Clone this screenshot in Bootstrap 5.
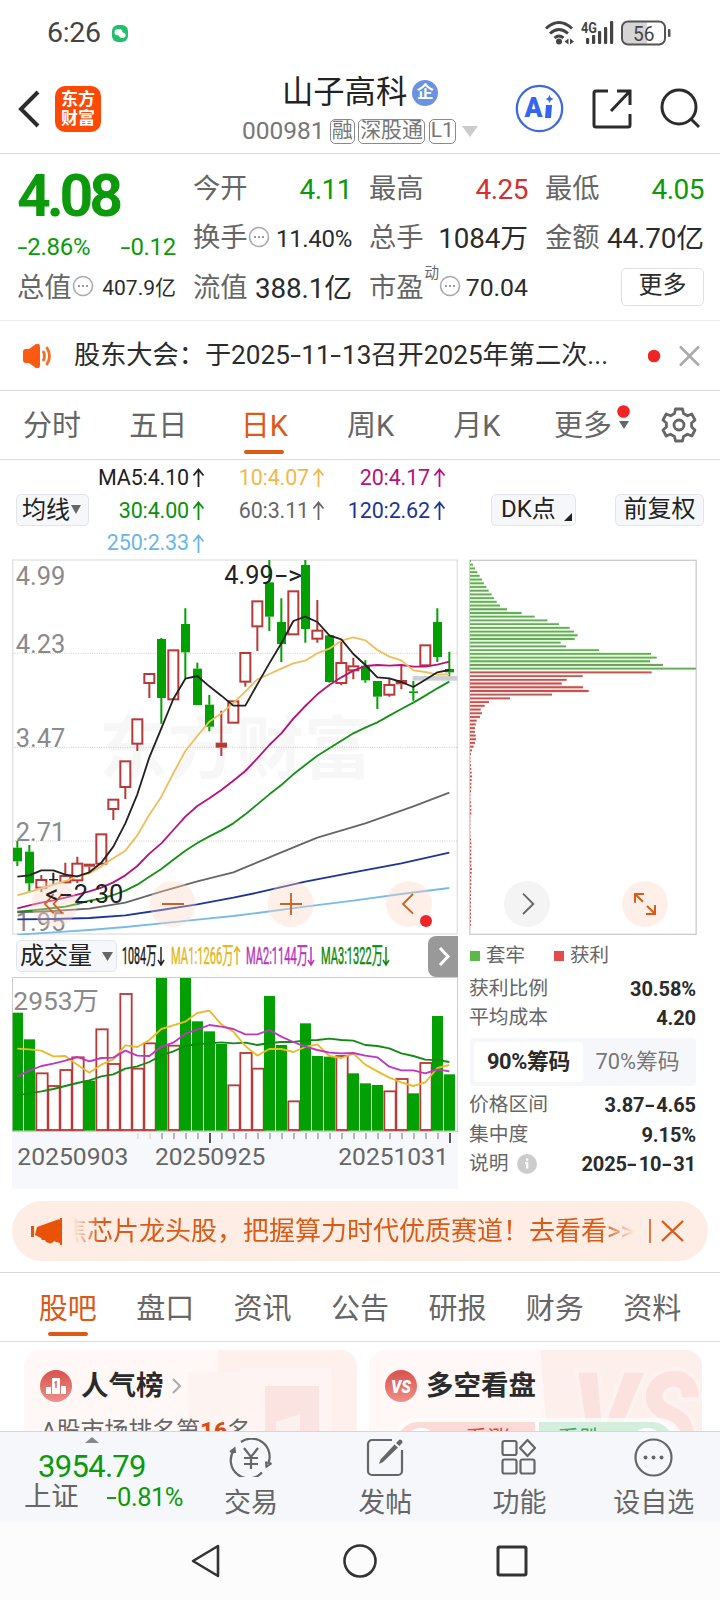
<!DOCTYPE html>
<html lang="zh-CN">
<head>
<meta charset="utf-8">
<meta name="viewport" content="width=device-width, initial-scale=1">
<title>山子高科 000981</title>
<link href="https://cdn.jsdelivr.net/npm/bootstrap@5.3.0/dist/css/bootstrap.min.css" rel="stylesheet">
<style>
:root{--up:#d22f2f;--down:#0c9a0c;--accent:#dc5a16;--ink:#2b2b2b;--grey:#666;--rule:#d9d9d9}
body{width:720px;height:1600px;overflow:hidden;margin:0;background:#fff;color:var(--ink);font-family:Roboto,"Noto Sans CJK SC",sans-serif;line-height:1}
svg{display:block;flex:none}
svg text{font-family:Roboto,"Noto Sans CJK SC",sans-serif}
.nw{white-space:nowrap}
.c-up{color:var(--up)}.c-down{color:var(--down)}.c-grey{color:var(--grey)}.c-accent{color:var(--accent)}
.hy{display:inline-block;transform:scaleX(1.5);margin:0 2.5px 0 1.5px}
.statusbar{height:64px;padding:2px 49px 0 47px;color:#444}
.clock{font-size:28.5px;letter-spacing:-.3px}
.hdr{height:90px;border-bottom:1px solid var(--rule);padding:0 19px 0 18px}
.logo{width:46px;height:46px;border-radius:10px;background:#fc4a06;color:#fff;font-weight:700;font-size:17px;line-height:19px;padding-top:4px;text-align:center;margin-left:15px}
.stock-name{font-size:31.3px;height:32px;line-height:32px;color:#222}
.corp{width:26px;height:26px;border-radius:50%;background:#6a92e2;color:#fff;font-size:17px;font-weight:700;line-height:25px;text-align:center;margin-left:5px}
.code{font-size:24.5px;color:#777;letter-spacing:0;margin-right:5px}
.tagbox{border:1.5px solid #8a8a8a;border-radius:5px;height:25px;font-size:21px;line-height:21px;color:#777;padding:0 1px;margin-right:3.5px}
.quote{height:167px;border-bottom:1px solid #ececec;padding:11px 16px 0 17px;display:grid;grid-template-columns:repeat(4,1fr);column-gap:17px;grid-template-rows:49px 50px 49px}
.quote>div{display:flex;align-items:center;justify-content:space-between;white-space:nowrap}
.lbl{font-size:27.3px;color:#666}
.v28{font-size:28px;letter-spacing:-.5px}.v27{font-size:27.8px;letter-spacing:-.1px}.v24{font-size:24px;letter-spacing:-.3px}.v21{font-size:21px}
.price{font-size:59px;font-weight:700;letter-spacing:-4.2px;line-height:60px;margin-top:13px}
.more{width:83px;height:38px;border:1.5px solid #e0e0e0;border-radius:5px;font-size:24px;line-height:33px;text-align:center}
.news{height:70px;border-bottom:1px solid var(--rule);padding:0 20px 0 22px}
.ptabs{height:69px;border-bottom:1px solid var(--rule)}
.ptabs>div{width:106.2px;text-align:center;font-size:29px;color:#666;position:relative;left:-1px;height:68px;line-height:71px;white-space:nowrap}
.ptabs>.on,.stabs>.on{color:var(--accent)}
.on::after{content:"";position:absolute;left:50%;width:40px;margin-left:-20px;bottom:5px;height:4.5px;border-radius:2px;background:var(--accent)}
.ma{height:99px;padding:0 16px}
.magrid{display:grid;grid-template-columns:105px 120px 121px;grid-auto-rows:32.7px;margin:1.5px 1px 0 11px;font-size:21.5px;text-align:right;width:346px}
.magrid>div{display:flex;justify-content:flex-end;align-items:center;gap:3px;letter-spacing:-.15px;white-space:nowrap}
.chip{background:#f6f7fa;border:1.5px solid #e1e4e8;border-radius:5px;height:32px;line-height:28px;font-size:24px;color:#222;white-space:nowrap;position:relative}
.charts{height:630px;padding-left:12px}
.rp{width:228px;margin-left:11px}
.rp .rw{display:flex;justify-content:space-between;align-items:center;height:29.3px;font-size:19.8px;color:#666;padding-right:1px}
.rp .rw b{font-size:20px;color:#2b2b2b;letter-spacing:-.1px}
.key{width:10px;height:10px}
.seg{height:48px;background:#f6f7fa;border-radius:4px;padding:4px;margin:5px 1px 5px 1px;display:flex;font-size:21.8px;line-height:40px;text-align:center;color:#777}
.seg>div:first-child{background:#fff;width:109px;border-radius:4px;color:#2b2b2b;font-weight:700;letter-spacing:-.3px;white-space:nowrap}
.seg>div:last-child{flex:1}
.promo{margin:12px 12px 0;height:60px;border-radius:30px;background:#fdede4;padding:0 22px 0 19px;color:var(--accent)}
.ticker{width:562px;height:36px;line-height:36px;margin-left:11px;overflow:hidden;white-space:nowrap;font-size:26px;-webkit-mask-image:linear-gradient(90deg,transparent,#000 26px,#000 530px,transparent);mask-image:linear-gradient(90deg,transparent,#000 26px,#000 530px,transparent)}
.ticker>span{display:block;margin-left:-12px}
.stabs{height:70px;margin-top:11px;border-top:1px solid var(--rule);border-bottom:1px solid var(--rule);padding:0 19px}
.stabs>div{flex:1;text-align:center;font-size:29px;line-height:72px;height:68px;color:#666;position:relative}
.feed{height:89px;padding:8px 18px 0 24px;overflow:hidden;gap:12px}
.tile{width:333px;height:150px;border-radius:16px;overflow:hidden;background:#fff8f6;position:relative}
.tile .deco{position:absolute;right:0;top:0}
.tile .inner{position:relative}
.tile h3{font-size:27.5px;font-weight:700;margin:0 0 0 9px;line-height:32px;color:#2b2b2b}
.dock{height:91px;background:#f5f7fa;border-top:1.5px solid #d3d6da}
.dock .it{width:134.2px;display:flex;flex-direction:column;align-items:center;font-size:27px;color:#666;position:relative;left:1px}
.dock .it svg{margin-top:6px;margin-bottom:13px}
.sysnav{height:78px;background:#fcfcfc;padding:0 192px 0 190px}
</style>
</head>
<body>
<div class="statusbar d-flex align-items-center">
  <span class="clock">6:26</span>
  <svg width="16" height="17" viewBox="0 0 16 17" style="margin-left:11px"><rect width="16" height="17" rx="6" fill="#22bf6c"/><ellipse cx="6.500" cy="7.200" rx="4" ry="3.200" fill="#fff"/><ellipse cx="10.300" cy="10.300" rx="3.300" ry="2.700" fill="#fff"/></svg>
  <div class="ms-auto d-flex align-items-center">
    <svg width="31" height="26" viewBox="0 0 31 26" fill="none" stroke="#444" stroke-width="3"><path d="M2 8.500Q15 -3.500 28 8.500M6 13.500Q15 5.500 24 13.500M10.500 18Q15 14 19.500 18"/><circle cx="15" cy="21.500" r="3" fill="#444" stroke="none"/><path d="M24.500 18.500v6l-4-3zM26 18.500v6l4-3z" fill="#444" stroke="none"/></svg>
    <svg width="34" height="26" viewBox="0 0 34 26" style="margin-left:6px" fill="#444"><text x="0" y="12.500" font-size="15" font-weight="700" textLength="16" lengthAdjust="spacingAndGlyphs">4G</text><rect x="5" y="18" width="3.200" height="6" rx="1"/><rect x="11" y="15" width="3.200" height="9" rx="1"/><rect x="17" y="11" width="3.200" height="13" rx="1"/><rect x="23" y="7" width="3.200" height="17" rx="1"/><rect x="29" y="1" width="3.200" height="23" rx="1"/></svg>
    <svg width="50" height="26" viewBox="0 0 50 26" style="margin-left:6px"><rect x="1" y="1.500" width="43" height="23" rx="6" fill="#fff"/><path d="M7 2h19v22H7a5 5 0 0 1-5-5V7a5 5 0 0 1 5-5z" fill="#d5d5d5"/><rect x="1" y="1.500" width="43" height="23" rx="6" fill="none" stroke="#555" stroke-width="2"/><rect x="47" y="9" width="2.500" height="8" rx="1" fill="#555"/><text x="12" y="20.500" font-size="21" fill="#444" textLength="21.500" lengthAdjust="spacingAndGlyphs">56</text></svg>
  </div>
</div>

<header class="hdr d-flex">
  <div class="d-flex align-items-center" style="width:224px">
    <svg width="22" height="38" viewBox="0 0 22 38" fill="none" stroke="#2b2b2b" stroke-width="4"><path d="M20 2L3 19l17 17"/></svg>
    <div class="logo">东方<br>财富</div>
  </div>
  <div style="width:236px;padding-top:13px">
    <div class="d-flex align-items-center nw" style="padding-left:40px"><span class="stock-name">山子高科</span><span class="corp">企</span></div>
    <div class="d-flex align-items-center nw" style="margin-top:10px"><span class="code">000981</span><span class="tagbox">融</span><span class="tagbox">深股通</span><span class="tagbox">L1</span><svg width="16" height="11" viewBox="0 0 16 11" style="margin-left:3px"><path d="M0 0h16L8 11z" fill="#ccc"/></svg></div>
  </div>
  <div class="d-flex align-items-center ms-auto" style="gap:28px">
    <svg width="49" height="49" viewBox="0 0 49 49"><circle cx="24.500" cy="24.500" r="22.700" fill="#fff" stroke="#3f68dc" stroke-width="2.300"/><text x="9.500" y="33" font-size="28" font-weight="900" fill="#3564f0" textLength="18" lengthAdjust="spacingAndGlyphs">A</text><path d="M31 21h6l-1 13h-6z" fill="#3564f0"/><path d="M34.500 11l1.300 2.700 2.700 1.300-2.700 1.300-1.300 2.700-1.300-2.700-2.700-1.300 2.700-1.300z" fill="#3564f0"/></svg>
    <svg width="40" height="40" viewBox="0 0 40 40" fill="none" stroke="#2b2b2b" stroke-width="3"><path d="M16 2H4a2 2 0 0 0-2 2v32a2 2 0 0 0 2 2h32a2 2 0 0 0 2-2V25M25 2h13v14M38 2L19 22"/></svg>
    <svg width="41" height="41" viewBox="0 0 41 41" fill="none" stroke="#2b2b2b" stroke-width="3"><circle cx="19" cy="19" r="17"/><path d="M31 31l8 8"/></svg>
  </div>
</header>

<section class="quote">
  <div class="c-down"><span class="price">4.08</span></div>
  <div><span class="lbl">今开</span><span class="v28 c-down">4.11</span></div>
  <div><span class="lbl">最高</span><span class="v28 c-up">4.25</span></div>
  <div><span class="lbl">最低</span><span class="v28 c-down">4.05</span></div>
  <div class="c-down v24" style="padding-top:15px"><span><span class="hy">-</span>2.86%</span><span><span class="hy">-</span>0.12</span></div>
  <div><span class="d-flex align-items-center"><span class="lbl">换手</span><svg width="22" height="22" viewBox="0 0 22 22" style="margin-top:-4px"><circle cx="11" cy="11" r="9.500" fill="none" stroke="#aaa" stroke-width="1.600"/><path d="M6 11h2M10 11h2M14 11h2" stroke="#999" stroke-width="2"/></svg></span><span class="v24">11.40%</span></div>
  <div><span class="lbl">总手</span><span class="v27">1084万</span></div>
  <div><span class="lbl">金额</span><span class="v27">44.70亿</span></div>
  <div><span class="d-flex align-items-center"><span class="lbl">总值</span><svg width="22" height="22" viewBox="0 0 22 22" style="margin-top:-4px"><circle cx="11" cy="11" r="9.500" fill="none" stroke="#aaa" stroke-width="1.600"/><path d="M6 11h2M10 11h2M14 11h2" stroke="#999" stroke-width="2"/></svg></span><span class="v21">407.9亿</span></div>
  <div><span class="lbl">流值</span><span class="v27">388.1亿</span></div>
  <div><span class="d-flex align-items-center"><span class="lbl">市盈</span><span class="c-grey" style="font-size:14.500px;margin:-28px 0 0 1px">动</span><svg width="22" height="22" viewBox="0 0 22 22" style="margin-top:-4px"><circle cx="11" cy="11" r="9.500" fill="none" stroke="#aaa" stroke-width="1.600"/><path d="M6 11h2M10 11h2M14 11h2" stroke="#999" stroke-width="2"/></svg></span><span style="font-size:24.800px">70.04</span></div>
  <div class="justify-content-end"><span class="more ms-auto" style="margin-top:-3px">更多</span></div>
</section>

<section class="news d-flex align-items-center">
  <svg width="31" height="26" viewBox="0 0 31 26"><path d="M1 9q0-3 3-3h3L14 1q4-1 4 3v18q0 4-4 3l-7-5H4q-3 0-3-3z" fill="#fc5a10"/><path d="M21 8q3 5 0 10M24.500 4q6 9 0 18" fill="none" stroke="#fc6a24" stroke-width="2.800"/></svg>
  <span class="nw" style="font-size:26.200px;margin-left:21px;width:538px;color:#2b2b2b">股东大会：于2025<span class="hy">-</span>11<span class="hy">-</span>13召开2025年第二次...</span>
  <svg class="ms-auto" width="52" height="22" viewBox="0 0 52 22"><circle cx="6" cy="11" r="6.300" fill="#ef2424"/><path d="M32 1.500l19 19M51 1.500l-19 19" stroke="#aaa" stroke-width="2.600"/></svg>
</section>

<nav class="ptabs d-flex">
  <div>分时</div><div>五日</div><div class="on">日K</div><div>周K</div><div>月K</div>
  <div>更多<svg class="position-absolute" style="left:87px;top:14px" width="14" height="26" viewBox="0 0 14 26"><circle cx="6.500" cy="6.500" r="6.300" fill="#ef2424"/><path d="M2 16h10l-5 8z" fill="#666"/></svg></div>
  <svg class="my-auto" style="margin-left:24px" width="36" height="36" viewBox="0 0 36 36" fill="none" stroke="#666" stroke-width="2.800" stroke-linejoin="round"><path d="M14.500 2h7l1 4.500 4 2.300 4.300-1.800 3.200 6-3.400 3v4l3.400 3-3.200 6-4.300-1.800-4 2.300-1 4.500h-7l-1-4.500-4-2.300L5.200 29 2 23l3.400-3v-4L2 13l3.200-6 4.300 1.800 4-2.300z"/><circle cx="18" cy="18" r="5"/></svg>
</nav>

<section class="ma d-flex">
  <div class="chip d-flex align-items-center align-self-center" style="width:73px;padding-left:5px;gap:1px">均线<svg width="10" height="9" viewBox="0 0 10 9"><path d="M0 0h10L5 9z" fill="#666"/></svg></div>
  <div class="magrid" id="legend"></div>
  <div class="chip align-self-center" style="width:85px;margin-left:44px;padding-left:9px">DK点<svg class="position-absolute" style="right:3px;bottom:4px" width="8" height="8"><path d="M8 0v8H0z" fill="#222"/></svg></div>
  <div class="chip align-self-center ms-auto text-center" style="width:89px">前复权</div>
</section>

<section class="charts d-flex">
  <div style="width:446px">
    <svg width="446" height="376" viewBox="36 27 1338 1128" id="kline"></svg>
    <div class="d-flex align-items-center" style="height:42px;padding-left:4px">
      <div class="chip d-flex align-items-center" style="width:101px;padding-left:3px;gap:10px">成交量<svg width="11" height="9" viewBox="0 0 11 9"><path d="M0 0h11L5.500 9z" fill="#666"/></svg></div>
      <svg width="300" height="34" viewBox="117 0 300 34" font-size="23" id="vollegend"></svg>
      <svg class="ms-auto" width="30" height="41" viewBox="0 0 30 41"><path d="M8 0h22v41H8a8 8 0 0 1-8-8V8a8 8 0 0 1 8-8z" fill="#999"/><path d="M12 12l8 8.500-8 8.500" fill="none" stroke="#fff" stroke-width="3"/></svg>
    </div>
    <svg width="446" height="212" viewBox="36 141 1338 636" id="volume"></svg>
  </div>
  <div class="rp">
    <svg width="228" height="376" viewBox="27 27 684 1128" id="chips"></svg>
    <div class="d-flex align-items-center" style="height:39px;font-size:19.500px;color:#666;padding:3px 0 0 1px"><span class="key" style="background:#5bb84b"></span><span style="margin:0 29px 0 6px">套牢</span><span class="key" style="background:#e64b4b"></span><span style="margin-left:6px">获利</span></div>
    <div class="rw"><span>获利比例</span><b>30.58%</b></div>
    <div class="rw"><span>平均成本</span><b>4.20</b></div>
    <div class="seg"><div>90%筹码</div><div>70%筹码</div></div>
    <div class="rw"><span>价格区间</span><b>3.87<span class="hy">-</span>4.65</b></div>
    <div class="rw"><span>集中度</span><b>9.15%</b></div>
    <div class="rw"><span class="d-flex align-items-center" style="gap:8px">说明<svg width="20" height="20" viewBox="0 0 20 20"><circle cx="10" cy="10" r="10" fill="#ccc"/><path d="M9 4.500h2.300v2.200H9zM8 8h3.300v6.500H9V10H8z" fill="#fff"/></svg></span><b>2025<span class="hy">-</span>10<span class="hy">-</span>31</b></div>
  </div>
</section>

<section class="promo d-flex align-items-center">
  <svg width="31" height="27" viewBox="0 0 31 27" fill="#ea5304"><path d="M0 8h3v11H0zM6 9L27 1.500h2V0h2v27h-2v-2l-4-1-2-1q-2 3-5 2l-3-1-1-2-3 0-1-2-6-3z"/></svg>
  <div class="ticker"><span>焦芯片龙头股，把握算力时代优质赛道！去看看&gt;&gt;</span></div>
  <svg class="ms-auto" width="38" height="26" viewBox="0 0 38 26" stroke="#dc5a16"><path d="M2 1v24" stroke-width="1.600"/><path d="M14 3l21 20M35 3L14 23" stroke-width="2.400"/></svg>
</section>

<nav class="stabs d-flex"><div class="on">股吧</div><div>盘口</div><div>资讯</div><div>公告</div><div>研报</div><div>财务</div><div>资料</div></nav>

<section class="feed d-flex">
  <div class="tile">
    <svg class="deco" width="175" height="90" viewBox="0 0 175 90"><path d="M36 0h139v90H36z" fill="#fdeeeb" opacity=".8"/><path d="M6 90V22h56v68z" fill="#fdf3f1"/><path d="M26 90V65h32V18h92v72z" fill="#fef4f2"/><path d="M83 36h54v54H83z" fill="#fae3e0"/><path d="M94 72l24-8v26H94z" fill="#fdf0ee"/></svg>
    <div class="inner" style="padding:20px 0 0 16px">
      <div class="d-flex align-items-center"><svg width="32" height="32" viewBox="0 0 32 32"><defs><linearGradient id="rg" x2="0" y2="1"><stop stop-color="#d9504c"/><stop offset="1" stop-color="#ef9089"/></linearGradient></defs><circle cx="16" cy="16" r="16" fill="url(#rg)"/><path d="M6 24v-7h5v7zM12 24V8h8v16zM21 24v-8h5v8z" fill="#fff"/><path d="M14.500 13l1.500-1v6" stroke="#dc645f" stroke-width="1.500" fill="none"/></svg><h3>人气榜</h3><svg style="margin-left:8px" width="10" height="16" viewBox="0 0 10 16" fill="none" stroke="#aaa" stroke-width="2"><path d="M1 1l7 7-7 7"/></svg></div>
      <div class="nw c-grey" style="font-size:24px;margin:17px 0 0 1px;letter-spacing:-.1px">A股市场排名第<b style="color:#dc4a16">16</b>名</div>
    </div>
  </div>
  <div class="tile">
    <svg class="deco" width="162" height="90" viewBox="0 0 162 90"><path d="M0 0h162v90H8z" fill="#fdecea" opacity=".8"/><text x="32" y="107" font-size="118" font-weight="900" font-style="italic" fill="#fbe2df" stroke="#fef2f0" stroke-width="8" paint-order="stroke" textLength="126" lengthAdjust="spacingAndGlyphs">VS</text></svg>
    <div class="inner" style="padding:20px 0 0 16px">
      <div class="d-flex align-items-center"><svg width="32" height="32" viewBox="0 0 32 32"><circle cx="16" cy="16" r="16" fill="url(#rg)"/><text x="6" y="22.500" font-size="19" font-weight="900" font-style="italic" fill="#fff" textLength="20" lengthAdjust="spacingAndGlyphs">VS</text></svg><h3>多空看盘</h3></div>
      <svg style="margin:16px 0 0 8px" width="290" height="60" viewBox="0 0 290 60"><rect x="0" y="0" width="290" height="60" rx="24" fill="#fff" opacity=".7"/><path d="M142 4H25a21 21 0 0 0 0 42h117z" fill="#fcdad7"/><path d="M146 4h113a21 21 0 0 1 0 42H146z" fill="#d4eedc"/><circle cx="28" cy="27" r="17" fill="#fff"/><circle cx="254" cy="27" r="17" fill="#fff"/><text x="72" y="29" font-size="22.500" fill="#dc4a32">看涨</text><text x="164" y="29" font-size="22.500" fill="#3fa565">看跌</text></svg>
    </div>
  </div>
</section>

<footer class="dock d-flex">
  <div style="width:183px;padding-left:24px">
    <svg style="margin:5px 0 0 61px" width="14" height="6" viewBox="0 0 14 6"><path d="M0 6h14L7 0z" fill="#888"/></svg>
    <div class="c-down" style="font-size:31px;letter-spacing:-.7px;margin:8px 0 0 14px">3954.79</div>
    <div class="d-flex align-items-center justify-content-between" style="margin-top:2px"><span class="lbl">上证</span><span class="c-down" style="font-size:25.500px;letter-spacing:-.5px"><span class="hy">-</span>0.81%</span></div>
  </div>
  <div class="it"><svg width="44" height="39" viewBox="0 0 44 39" fill="none" stroke="#666" stroke-width="2.200"><path d="M12 4A18 18 0 0 1 39 26M42.500 25l-5 3.500-.5-5M33 34.500A18 18 0 0 1 5 12M1 14l4.500-3.500L6 15M15 10l7 9 7-9M15 20h14M15 26h14M22 19v12"/></svg>交易</div>
  <div class="it"><svg width="38" height="39" viewBox="0 0 38 39" fill="none" stroke="#666" stroke-width="2.200"><path d="M26 2H6a4 4 0 0 0-4 4v27a4 4 0 0 0 4 4h26a4 4 0 0 0 4-4V12"/><path d="M28.500 6.500l3.500 3-15 14.500-4 2 1.500-4.500zM30 5l3.500-3.500q3 0 3 3L33.500 8z" fill="#666" stroke="none"/></svg>发帖</div>
  <div class="it"><svg width="36" height="39" viewBox="0 0 36 39" fill="none" stroke="#666" stroke-width="2.200"><rect x="1.500" y="3" width="14" height="14" rx="2"/><rect x="1.500" y="21.500" width="14" height="14" rx="2"/><rect x="19.500" y="21.500" width="14" height="14" rx="2"/><path d="M26.500 2l7.500 8-7.500 8-7.500-8z" stroke-linejoin="round"/></svg>功能</div>
  <div class="it"><svg width="39" height="39" viewBox="0 0 39 39" fill="none" stroke="#666" stroke-width="2.200"><circle cx="19.500" cy="19.500" r="18"/><g fill="#666" stroke="none"><circle cx="11.500" cy="19.500" r="2"/><circle cx="19.500" cy="19.500" r="2"/><circle cx="27.500" cy="19.500" r="2"/></g></svg>设自选</div>
</footer>

<div class="sysnav d-flex align-items-center justify-content-between">
  <svg width="31" height="34" viewBox="0 0 31 34" fill="none" stroke="#333" stroke-width="2.600" stroke-linejoin="round"><path d="M28 2v30L3 17z"/></svg>
  <svg width="34" height="34" viewBox="0 0 34 34" fill="none" stroke="#333" stroke-width="2.600" style="margin-left:2px"><circle cx="17" cy="17" r="15.500"/></svg>
  <svg width="32" height="32" viewBox="0 0 32 32" fill="none" stroke="#333" stroke-width="3"><rect x="2" y="2" width="28" height="28" rx="1.500"/></svg>
</div>

<script src="https://cdn.jsdelivr.net/npm/bootstrap@5.3.0/dist/js/bootstrap.bundle.min.js"></script>
<script>
const G='#02a002',R='#b83a38',STEP=36,X0=52;
const cx=i=>X0+STEP*i;
const line=(a,c,w=5.5)=>`<polyline fill="none" stroke="${c}" stroke-width="${w}" stroke-linejoin="round" points="${a.map((p,i)=>Array.isArray(p)?cx(p[0])+','+p[1]:cx(i)+','+p).join(' ')}"/>`;
const label=(x,y,s,w,size,c)=>`<text x="${x}" y="${y}" font-size="${size}" fill="${c}" textLength="${w}" lengthAdjust="spacingAndGlyphs">${s}</text>`;

/* legend of moving averages */
document.getElementById('legend').innerHTML=[['MA5:4.10','#222'],['10:4.07','#efb84e'],['20:4.17','#b6127c'],['30:4.00','#0c8f0c'],['60:3.11','#666'],['120:2.62','#1d3599'],['250:2.33','#6cb5e8']]
 .map(([t,c])=>`<div style="color:${c}">${t}<svg width="13" height="19" viewBox="0 0 13 19" fill="none" stroke="currentColor" stroke-width="1.8"><path d="M6.500 19V2M1.500 7.500l5-6 5 6"/></svg></div>`).join('');

/* candles: kind, high, open/close top, open/close bottom, low */
const candles=[['g',872,893,934,948],['g',885,905,1000,1025],['r',975,988,1012,1025],['k',968,987,991,1005],['r',938,976,996,1000],['r',920,939,990,1000],['s',941,941,950,966],['r',851,851,940,940],['r',747,747,776,810],['r',632,632,710,747],['r',506,506,580,603],['r',370,370,398,444],['g',264,267,444,521],['r',299,299,447,447],['g',175,222,307,385],['g',338,356,465,465],['g',435,464,530,544],['s',482,578,593,618],['r',452,452,517,517],['r',307,307,394,410],['r',152,152,228,303],['g',30,97,200,243],['g',145,216,282,336],['r',122,122,252,252],['g',30,45,237,278],['r',150,240,265,278],['g',256,256,396,398],['r',275,337,398,406],['r',323,347,360,388],['g',331,347,391,398],['g',393,393,440,477],['r',385,403,433,440],['s',343,390,403,418],['g',393,424,429,452],['r',284,284,345,345],['g',175,216,321,336],['g',305,357,367,378]];
let k='<rect x="36" y="27" width="1338" height="1128" fill="#fff"/>';
k+='<text x="298" y="670" font-size="205" font-weight="700" fill="#f7f7f8" textLength="818" lengthAdjust="spacingAndGlyphs">东方财富</text>';
[310,592,873].forEach(y=>k+=`<path d="M38 ${y}H1372" stroke="#ccc" stroke-width="3" stroke-dasharray="3 4"/>`);
k+='<rect x="38" y="30" width="1334" height="1122" fill="none" stroke="#e0e0e0" stroke-width="4"/>';
[[0,106],[0,308],[0,590],[0,872]].forEach((p,i)=>k+=label(47,p[1],['4.99','4.23','3.47','2.71'][i],149,75,'#8a8a8a'));
k+=label(47,1142,'1.95',149,75,'#8a8a8a');
k+='<rect x="1238" y="378" width="134" height="14" fill="#ccd0d3"/>';
candles.forEach(([t,h,a,b,l],i)=>{const x=cx(i),c=t=='g'?G:t=='k'?'#222':R;
 k+=`<path d="M${x} ${h}V${t=='k'?l:a}M${x} ${b}V${l}" stroke="${c}" stroke-width="6"/>`;
 k+=t=='r'?`<rect x="${x-15}" y="${a+2}" width="30" height="${b-a-1}" fill="#fff" stroke="${c}" stroke-width="6"/>`:`<rect x="${x-(t=='s'?17:13)}" y="${a}" width="${t=='s'?34:27}" height="${Math.max(b-a,4)}" fill="${c}"/>`;});
k+=line([1154,[3,1147],[6,1140],[9,1131],[12,1120],[15,1109],[18,1098],[20,1089],[24,1070],[28,1052],[32,1032],[36,1014]],'#78bbe8');
k+=line([1108,[3,1107],[6,1104],[9,1096],[12,1080],[15,1063],[18,1043],[20,1028],[24,995],[28,967],[32,940],[36,908]],'#1d3599');
k+=line([1087,[3,1083],[6,1076],[9,1058],[12,1025],[15,994],[18,967],[19,952],[22,907],[25,863],[29,820],[33,769],[36,728]],'#666');
k+=line([1085,1082,1078,1074,1070,1062,1052,1046,1035,1022,1004,980,957,929,902,879,859,841,820,793,763,733,705,673,645,617,595,572,550,533,517,497,477,458,437,415,395],'#169016');
k+=line([1075,1066,1058,1051,1043,1034,1024,1013,997,976,948,911,880,840,800,768,745,720,692,663,625,585,550,506,468,433,405,382,362,348,345,347,345,350,350,344,335],'#b6127c');
k+=line([1036,1026,1015,1004,993,980,970,949,925,902,856,794,740,670,603,558,515,490,459,425,388,372,356,340,332,310,296,272,262,271,300,320,331,361,366,374,373],'#efbd5c');
k+=line([980,976,961,961,974,979,967,938,890,820,733,622,535,447,386,378,409,437,467,467,403,340,280,213,200,216,256,268,312,345,382,385,396,411,389,367,360],'#222');
[163,518,872,1227].forEach(x=>k+=`<circle cx="${x}" cy="1062" r="69" fill="#fbd5c3" opacity=".36"/>`);
k+='<path d="M161 1032l-26 30 26 28M187 1032l-26 30 26 28M486 1062h66M840 1062h66M873 1029v66M1239 1032l-30 30 30 29" fill="none" stroke="#cc6124" stroke-width="5.500"/>';
k+='<circle cx="1278" cy="1113" r="18" fill="#ef2424"/>';
k+=label(673,102,'4.99',148,76,'#222')+label(826,102,'-',36,76,'#222')+label(864,102,'&gt;',42,76,'#222')+label(136,1060,'&lt;',40,76,'#222')+label(179,1060,'-',36,76,'#222')+label(221,1060,'2.30',149,76,'#222');
document.getElementById('kline').innerHTML=k;

/* distribution of holding costs */
const held=[33,39,45,52,59,66,72,79,86,95,102,110,120,141,185,224,262,297,329,342,353,344,302,318,417,573,590,570,609,708],
 gain=[575,368,320,305,369,386,276,150,87,74,62,66,60,50,47,45,45,47,48,45,41,36,33,31,31,33,34,35,36,35,34,34,33,31,31,33,34,34,34,31,31,31,31,31,31,33,34,34,34,34,34,34,34,36,35,34,34,34,33,33,33,33,33,33,33,33,33,33,33];
let d='<rect x="29.500" y="31" width="679" height="1122" fill="none" stroke="#ccc" stroke-width="4"/>';
held.concat(gain).forEach((x,i)=>{const y=33+11.14*i,c=i<30?(i%5==3?'#6f9f67':'#68aa5c'):(i%5==1?'#ab6060':'#c4524f');d+=`<path d="M30 ${y}H${x}" stroke="${i<30?'#dcfbd0':'#ffdfdc'}" stroke-width="10"/><path d="M30 ${y}H${x}" stroke="${c}" stroke-width="5.500"/>`;});
d+='<circle cx="201" cy="1062" r="69" fill="#f4f4f4"/><path d="M189 1031l31 31-31 30" fill="none" stroke="#666" stroke-width="5.500"/><circle cx="555" cy="1062" r="69" fill="#fef0e8"/><path d="M549 1055l-24-23M525 1058v-26h27M561 1068l24 23M585 1065v27h-27" fill="none" stroke="#dc5a16" stroke-width="6"/>';
document.getElementById('chips').innerHTML=d;

/* volume header */
document.getElementById('vollegend').innerHTML=[[122,43,'1084万','#222',0,.455],[171,70,'MA1:1266万','#e6b61f',1,.476],[246,69,'MA2:1144万','#bb35bb',0,.47],[321,69,'MA3:1322万','#0f8a0f',0,.47]]
 .map(([x,w,s,c,up,f])=>`<text transform="translate(${x} 25) scale(${f} 1)" font-size="23.5" fill="${c}" stroke="${c}" stroke-width=".5">${s}</text><path d="${up?`M${x+w-4} 26V8m-3 5l3-5 3 5`:`M${x+w-4} 8V26m-3-5l3 5 3-5`}" fill="none" stroke="${c}" stroke-width="1.500"/>`).join('');

/* volume bars: kind and top */
const vol='g248 g328 r428 r466 r418 r380 g452 r296 r400 r190 r414 r338 g144 r345 g144 g274 g304 g342 r464 r367 r414 g198 g345 r512 g280 g378 g380 r376 g430 g460 g465 r482 r445 g490 r397 g258 g433'.split(' ');
let v='<rect x="36" y="606" width="1338" height="171" fill="#f7f8fb"/><rect x="37.500" y="142.500" width="1335" height="462" fill="#fff" stroke="#ccc" stroke-width="3"/>';
v+=label(40,239,'2953万',257,79,'#8a8a8a');
vol.forEach((s,i)=>{const x=cx(i),y=+s.slice(1);v+=s[0]=='g'?`<rect x="${i?x-16:38}" y="${y}" width="${i?33:31}" height="${602-y}" fill="${G}"/>`:`<rect x="${x-15}" y="${y+2}" width="34" height="${598-y}" fill="#fff" stroke="${R}" stroke-width="5.500"/>`;});
v+=line([496,490,484,477,468,459,451,439,433,416,409,396,376,364,348,342,340,337,340,338,345,339,336,336,331,330,326,330,332,345,348,355,370,378,389,390,396],'#138a13');
v+=line([356,358,362,379,378,404,428,404,388,346,351,330,297,286,275,249,242,283,305,348,377,357,357,366,351,343,378,384,371,404,424,443,457,468,457,414,405],'#e8bb2c');
v+=line([440,422,408,401,392,381,394,384,383,362,377,378,350,338,311,299,285,290,297,313,313,300,320,336,350,360,368,370,369,377,382,410,421,421,430,418,424],'#c235c4');
for(let i=0;i<27;i++){const big=i==6||i==26;v+=`<path d="M${414+36*i} 609V${big?639:627}" stroke="${big?'#555':i<2?'#ddd':'#aaa'}" stroke-width="${big?6:5}"/>`;}
v+=label(52,704,'20250903',333,72,'#666')+label(465,704,'20250925',331,72,'#666')+label(1015,704,'20251031',331,72,'#666');
document.getElementById('volume').innerHTML=v;
</script>
</body>
</html>
